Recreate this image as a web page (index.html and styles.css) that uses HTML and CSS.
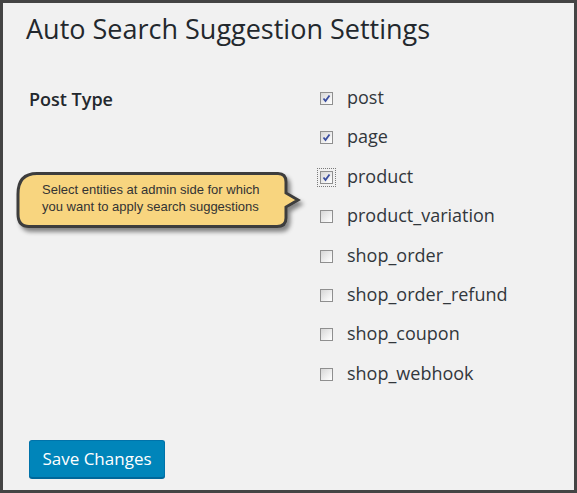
FILE: index.html
```html
<!DOCTYPE html>
<html>
<head>
<meta charset="utf-8">
<link rel="stylesheet" href="styles.css">
</head>
<body>
<div class="frame">
  <h1 class="title">Auto Search Suggestion Settings</h1>
  <div class="form-row">
    <div class="th">Post Type</div>
    <div class="options">
      <label class="opt"><span class="cb checked"><svg viewBox="0 0 11 11" width="11" height="11"><path d="M2.5 5.5 L4.5 8 L8.5 2.5" fill="none" stroke="#3a4d9f" stroke-width="1.8"/></svg></span><span class="lbl">post</span></label>
      <label class="opt"><span class="cb checked"><svg viewBox="0 0 11 11" width="11" height="11"><path d="M2.5 5.5 L4.5 8 L8.5 2.5" fill="none" stroke="#3a4d9f" stroke-width="1.8"/></svg></span><span class="lbl">page</span></label>
      <label class="opt"><span class="cb checked focus"><svg viewBox="0 0 11 11" width="11" height="11"><path d="M2.5 5.5 L4.5 8 L8.5 2.5" fill="none" stroke="#3a4d9f" stroke-width="1.8"/></svg></span><span class="lbl">product</span></label>
      <label class="opt"><span class="cb"></span><span class="lbl">product_variation</span></label>
      <label class="opt"><span class="cb"></span><span class="lbl">shop_order</span></label>
      <label class="opt"><span class="cb"></span><span class="lbl">shop_order_refund</span></label>
      <label class="opt"><span class="cb"></span><span class="lbl">shop_coupon</span></label>
      <label class="opt"><span class="cb"></span><span class="lbl">shop_webhook</span></label>
    </div>
  </div>
  <button class="btn">Save Changes</button>
  <div class="callout">
    <svg class="bubble" viewBox="0 0 300 70" width="300" height="70">
      <defs>
        <filter id="sh" x="-10%" y="-20%" width="130%" height="160%">
          <feDropShadow dx="3" dy="4" stdDeviation="2.2" flood-color="#000" flood-opacity="0.45"/>
        </filter>
      </defs>
      <path d="M22 3.5 H263 Q271 3.5 271 12 V23 L283 30 L271 37 V48 Q271 56.5 262 56.5 H14 Q3 56.5 3 44 V24 Q3 3.5 22 3.5 Z" fill="#f8d57f" stroke="#3d3d3d" stroke-width="3" filter="url(#sh)"/>
    </svg>
    <div class="callout-text">Select entities at admin side for which<br>you want to apply search suggestions</div>
  </div>
</div>
</body>
</html>
```
FILE: styles.css
```css
html, body {
  margin: 0;
  padding: 0;
}
body {
  width: 577px;
  height: 493px;
  overflow: hidden;
}
.frame {
  position: relative;
  box-sizing: border-box;
  width: 577px;
  height: 493px;
  border: 3px solid #444444;
  background: #f1f1f1;
  padding: 8px 0 0 26px;
  font-family: "Open Sans", sans-serif;
  color: #23282d;
}
.title {
  margin: 0 0 0 -3px;
  font-size: 27px;
  font-weight: 400;
  line-height: 36px;
  color: #23282d;
}
.form-row {
  display: flex;
  margin-top: 38px;
}
.th {
  width: 291px;
  font-size: 18px;
  font-weight: 600;
  line-height: 24px;
  padding-top: 2px;
}
.options {
  display: flex;
  flex-direction: column;
  gap: 15.4px;
}
.opt {
  display: flex;
  align-items: center;
  height: 24px;
  font-size: 18px;
  line-height: 24px;
  color: #32373c;
}
.cb {
  box-sizing: border-box;
  width: 13px;
  height: 13px;
  border: 1px solid #8f8f8f;
  background: linear-gradient(135deg, #d6d6d6 0%, #f4f4f4 70%, #ffffff 100%);
  display: flex;
  align-items: center;
  justify-content: center;
  margin: 3px 14px 0 0;
}
.cb svg {
  display: block;
}
.cb.focus {
  outline: 1px dotted #7a7a7a;
  outline-offset: 2px;
}
.lbl {
  display: block;
}
.btn {
  display: block;
  margin-top: 55px;
  width: 136px;
  height: 38px;
  box-sizing: border-box;
  background: #0085ba;
  border: 1px solid #0073aa;
  border-bottom-color: #006799;
  border-radius: 3px;
  box-shadow: 0 1px 0 #006799;
  color: #ffffff;
  font-family: "Open Sans", sans-serif;
  font-size: 17px;
  line-height: 34px;
  padding: 1px 0 1px;
  text-align: center;
}
.callout {
  position: absolute;
  left: 12px;
  top: 167px;
  width: 300px;
  height: 70px;
}
.bubble {
  position: absolute;
  left: 0;
  top: 0;
}
.callout-text {
  position: relative;
  padding: 12px 0 0 27px;
  font-family: "Liberation Sans", Arial, sans-serif;
  font-size: 13px;
  line-height: 16.5px;
  color: #333333;
}
```
